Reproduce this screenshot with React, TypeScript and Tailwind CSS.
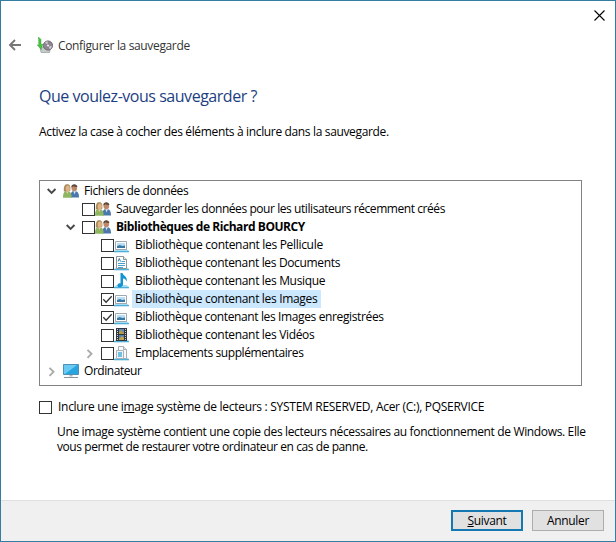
import React from 'react';
import clsx from 'clsx';

type IconName = 'users' | 'picture' | 'document' | 'music' | 'video' | 'folder' | 'computer';

interface TreeItem {
  label: string;
  icon: IconName;
  // left padding of the row and letter spacing of the label
  indent: string;
  tracking: string;
  arrow?: 'open' | 'closed';
  checked?: boolean;
  bold?: boolean;
  selected?: boolean;
}

const items: TreeItem[] = [
  { label: 'Fichiers de données', icon: 'users', indent: 'pl-[4px]', tracking: 'tracking-[-0.38px]', arrow: 'open' },
  { label: 'Sauvegarder les données pour les utilisateurs récemment créés', icon: 'users', indent: 'pl-[23px]', tracking: 'tracking-[-0.43px]', checked: false },
  { label: 'Bibliothèques de Richard BOURCY', icon: 'users', indent: 'pl-[23px]', tracking: 'tracking-[-0.44px]', arrow: 'open', checked: false, bold: true },
  { label: 'Bibliothèque contenant les Pellicule', icon: 'picture', indent: 'pl-[42px]', tracking: 'tracking-[-0.31px]', checked: false },
  { label: 'Bibliothèque contenant les Documents', icon: 'document', indent: 'pl-[42px]', tracking: 'tracking-[-0.34px]', checked: false },
  { label: 'Bibliothèque contenant les Musique', icon: 'music', indent: 'pl-[42px]', tracking: 'tracking-[-0.33px]', checked: false },
  { label: 'Bibliothèque contenant les Images', icon: 'picture', indent: 'pl-[42px]', tracking: 'tracking-[-0.33px]', checked: true, selected: true },
  { label: 'Bibliothèque contenant les Images enregistrées', icon: 'picture', indent: 'pl-[42px]', tracking: 'tracking-[-0.37px]', checked: true },
  { label: 'Bibliothèque contenant les Vidéos', icon: 'video', indent: 'pl-[42px]', tracking: 'tracking-[-0.33px]', checked: false },
  { label: 'Emplacements supplémentaires', icon: 'folder', indent: 'pl-[42px]', tracking: 'tracking-[-0.4px]', arrow: 'closed', checked: false },
  { label: 'Ordinateur', icon: 'computer', indent: 'pl-[4px]', tracking: 'tracking-[-0.45px]', arrow: 'closed' },
];

// Blue tray shared by the library icons
const Tray = () => (
  <>
    <path d="M2.500 12h10l2.500 2H0z" fill="#a5daf3" />
    <path d="M0 14h15v1.300H0z" fill="#4fb0da" />
  </>
);

const TreeIcon: React.FC<{ name: IconName }> = ({ name }) => {
  switch (name) {
    case 'users':
      return (
        <svg className="h-4 w-4 shrink-0" viewBox="0 0 16 16">
          <path d="M7.500 14.500c0-5 1-6.500 4-6.500s4.500 2 4.500 6.500z" fill="#4a78ab" />
          <path d="M10.300 8l1.200 3.500L13 8z" fill="#d8e3ec" />
          <ellipse cx="11.300" cy="5" rx="2.800" ry="3.200" fill="#bd8968" />
          <path d="M8.300 4.500C8 .6 14 .2 14.400 4c-2 .2-3-.6-3.700-.8z" fill="#5d4a3c" />
          <path d="M0 14.800c0-4.800 1.300-7 4-7s4.700 2 4.700 7z" fill="#8eb660" />
          <path d="M2.800 8l1.500 3L6 8z" fill="#e5c6a3" />
          <path d="M.8 8.500C.6 3 1.800 1.300 4.400 1.300S7.900 4 7.200 8z" fill="#a98b57" />
          <ellipse cx="4.800" cy="5.500" rx="2.100" ry="3" fill="#e0b48b" />
        </svg>
      );
    case 'picture':
      return (
        <svg className="h-4 w-4 shrink-0" viewBox="0 0 16 16">
          <Tray />
          <path d="M1.500 4.500h11v8h-11z" fill="#fff" stroke="#a0a8ad" />
          <path d="M3 6h8v5H3z" fill="#b8def5" />
          <path d="M3 9l3-1 2 1 3-.5V11H3z" fill="#3977a5" />
        </svg>
      );
    case 'document':
      return (
        <svg className="h-4 w-4 shrink-0" viewBox="0 0 16 16">
          <Tray />
          <path d="M2.500 1.500h7l3 3v9h-10z" fill="#fff" stroke="#8b9499" />
          <path d="M9.500 1.500v3h3" fill="#e3e8eb" stroke="#8b9499" />
          <path d="M7.500 6.500H11M4 8.500h7M4 10.500h7M4 12.500h5" stroke="#4b9ecb" />
          <path d="M4 6.500l1.300-3 1.200 3" fill="none" stroke="#3477a5" />
        </svg>
      );
    case 'music':
      return (
        <svg className="h-4 w-4 shrink-0" viewBox="0 0 16 16">
          <Tray />
          <path d="M6.500 0h2c.3 2.400 5.300 3.500 4.300 8.800-.6-2.200-1.800-3-3.800-3.300v6c0 3.200-5.500 4-5.500 1 0-1.700 1.500-2.500 3-2.200z" fill="#1594d2" />
        </svg>
      );
    case 'video':
      return (
        <svg className="h-4 w-4 shrink-0" viewBox="0 0 16 16">
          <Tray />
          <path d="M2 1h11v13H2z" fill="#33383d" />
          <path d="M5 2h5v5H5z" fill="#5c88bd" />
          <path d="M5 5l2-2 3 3v1H5z" fill="#b49b48" />
          <path d="M5 8h5v5H5z" fill="#587fb2" />
          <path d="M5 12l3-3 2 2v2H5z" fill="#c2a54b" />
          <path d="M3.500 2v12M11.500 2v12" stroke="#cfd3d6" strokeDasharray="1 1" />
        </svg>
      );
    case 'folder':
      return (
        <svg className="h-4 w-4 shrink-0" viewBox="0 0 16 16">
          <Tray />
          <path d="M4.500 1.500h5l3 3v9h-8z" fill="#f8fafb" stroke="#a7aeb2" />
          <path d="M9.500 1.500v3h3" fill="#dfe4e7" stroke="#a7aeb2" />
          <path d="M2.500 5.500h7v8h-7z" fill="#eef4f7" stroke="#a7b2b9" />
          <path d="M4 7h4v5H4z" fill="#75bfe2" />
        </svg>
      );
    case 'computer':
      return (
        <svg className="h-4 w-4 shrink-0" viewBox="0 0 16 16">
          <path d="M.5 1.500h15v10H.5z" fill="#28a4e0" stroke="#4d91b4" />
          <path d="M1 2h13L2 11H1z" fill="#6bcaf4" />
          <path d="M6.500 12h3v1.500h-3z" fill="#a9b8c0" />
          <path d="M1 14.500h14" stroke="#8796a0" />
        </svg>
      );
  }
};

const Checkbox: React.FC<{ checked?: boolean }> = ({ checked }) => (
  <span className="flex h-[13px] w-[13px] shrink-0 border border-[#333] bg-white">
    {checked && (
      <svg className="h-[11px] w-[11px]" viewBox="0 0 11 11">
        <path d="M1.300 5.300l2.800 2.900 5.600-5.900" fill="none" stroke="#333" strokeWidth="1.300" />
      </svg>
    )}
  </span>
);

const Arrow: React.FC<{ kind?: 'open' | 'closed' }> = ({ kind }) => (
  <span className="flex h-4 w-4 shrink-0 items-center justify-center">
    {kind === 'open' && (
      <svg className="h-4 w-4" viewBox="0 0 16 16">
        <path d="M3.700 6l3.900 3.900L11.500 6" fill="none" stroke="#484848" strokeWidth="1.900" />
      </svg>
    )}
    {kind === 'closed' && (
      <svg className="h-4 w-4" viewBox="0 0 16 16">
        <path d="M5.500 4.800l4 4-4 4" fill="none" stroke="#aaa" strokeWidth="1.900" />
      </svg>
    )}
  </span>
);

const TreeRow: React.FC<{ item: TreeItem }> = ({ item }) => (
  <div className={clsx('flex h-[18px] items-center', item.indent)}>
    <Arrow kind={item.arrow} />
    {item.checked !== undefined ? (
      <span className="ml-[3px] flex items-center">
        <Checkbox checked={item.checked} />
      </span>
    ) : (
      <span className="w-[3px]" />
    )}
    <TreeIcon name={item.icon} />
    <span
      className={clsx(
        'ml-[2px] h-[18px] pr-1 pl-[3px] leading-[17px] whitespace-nowrap',
        item.tracking,
        item.bold && 'font-bold',
        item.selected && 'bg-[#cce8ff]'
      )}
    >
      {item.label}
    </span>
  </div>
);

const BackupIcon = () => (
  <svg className="h-4 w-4 shrink-0" viewBox="0 0 16 16">
    <path d="M3 10h11l-1.500 5.500H4z" fill="#c5cbc8" stroke="#878f8b" strokeWidth=".6" />
    <circle cx="11" cy="8.500" r="4.600" fill="#8f8794" stroke="#5c585f" strokeWidth=".8" />
    <path d="M11 8.500L8 5.300l2.500-1zM11 8.500l4 1-2 3z" fill="#d3ccd6" />
    <circle cx="11" cy="8.500" r="1.500" fill="#eee" stroke="#66606a" strokeWidth=".6" />
    <path d="M1.500 0L4 2.500v5L5.800 7 4.200 12.500.3 8l1.500-.2z" fill="#45c83d" stroke="#278c2a" strokeWidth=".4" />
  </svg>
);

export default function App() {
  return (
    <div className="flex h-[542px] w-[616px] flex-col border border-[#347ca2] bg-white font-['Open_Sans','Noto_Sans',sans-serif] text-[12px] text-black">
      {/* Title bar */}
      <div className="flex h-7 justify-end pt-[9px] pr-[10px]">
        <svg className="h-[11px] w-[11px]" viewBox="0 0 11 11">
          <path d="M.5.5l10 10M10.500.5l-10 10" stroke="#000" strokeWidth="1.100" />
        </svg>
      </div>
      <div className="flex h-8 items-center pl-[7px]">
        <svg className="h-[14px] w-[14px]" viewBox="0 0 14 14">
          <path d="M13 7H2M7 2L2 7l5 5" fill="none" stroke="#777" strokeWidth="1.900" />
        </svg>
        <span className="ml-[15px] flex"><BackupIcon /></span>
        <h1 className="ml-[5px] pt-[2px] tracking-[-0.35px] text-[#333]">Configurer la sauvegarde</h1>
      </div>

      {/* Page content */}
      <main className="flex flex-1 flex-col pl-[38px]">
        <h2 className="mt-[23px] h-6 text-[16px] leading-6 tracking-[-0.47px] whitespace-nowrap text-[#1d3e82]">
          Que voulez-vous sauvegarder ?
        </h2>
        <p className="mt-[15px] h-[18px] leading-[18px] tracking-[-0.35px] whitespace-nowrap">
          Activez la case à cocher des éléments à inclure dans la sauvegarde.
        </p>
        <div className="mt-[39px] h-[206px] w-[543px] border border-[#828282] pt-px">
          {items.map((item) => (
            <TreeRow key={item.label} item={item} />
          ))}
        </div>
        <label className="mt-[13px] flex h-4 items-center">
          <Checkbox />
          <span className="ml-[6px] leading-4 tracking-[-0.29px] whitespace-nowrap">
            Inclure une i<u>m</u>age système de lecteurs : SYSTEM RESERVED, Acer (C:), PQSERVICE
          </span>
        </label>
        <div className="mt-[9px] pl-[18px] leading-[15px] whitespace-nowrap">
          <p className="tracking-[-0.35px]">Une image système contient une copie des lecteurs nécessaires au fonctionnement de Windows. Elle</p>
          <p className="tracking-[-0.43px]">vous permet de restaurer votre ordinateur en cas de panne.</p>
        </div>
      </main>

      <footer className="flex h-[41px] gap-[9px] border-t border-[#dfdfdf] bg-[#f0f0f0] pt-[9px] pl-[450px]">
        <button className="h-[21px] w-[72px] border-2 border-[#1678b0] bg-[#e1e1e1] leading-[16px] tracking-[-0.3px]">
          <u>S</u>uivant
        </button>
        <button className="h-[21px] w-[72px] border border-[#adadad] bg-[#e1e1e1] leading-[18px] tracking-[-0.3px]">
          Annuler
        </button>
      </footer>
    </div>
  );
}
